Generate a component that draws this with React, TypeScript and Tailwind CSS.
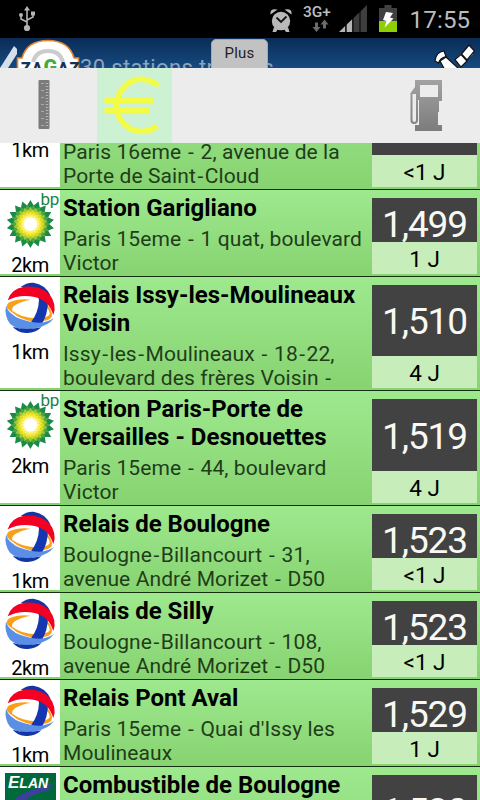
import { Fragment } from "react";
import { clsx } from "clsx";

type Brand = "bp" | "total" | "elan";

type Station = {
  brand?: Brand;
  km: string;
  title: string[];
  address: string[];
  price: string;
  age: string;
  /** row height, separator included */
  height: string;
};

const STATIONS: Station[] = [
  {
    km: "1km",
    title: ["", ""],
    address: ["Paris 16eme - 2, avenue de la", "Porte de Saint-Cloud"],
    price: "",
    age: "<1 J",
    height: "h-[115px]",
  },
  {
    brand: "bp",
    km: "2km",
    title: ["Station Garigliano"],
    address: ["Paris 15eme - 1 quat, boulevard", "Victor"],
    price: "1,499",
    age: "1 J",
    height: "h-[87px]",
  },
  {
    brand: "total",
    km: "1km",
    title: ["Relais Issy-les-Moulineaux", "Voisin"],
    address: ["Issy-les-Moulineaux - 18-22,", "boulevard des frères Voisin -"],
    price: "1,510",
    age: "4 J",
    height: "h-[114px]",
  },
  {
    brand: "bp",
    km: "2km",
    title: ["Station Paris-Porte de", "Versailles - Desnouettes"],
    address: ["Paris 15eme - 44, boulevard", "Victor"],
    price: "1,519",
    age: "4 J",
    height: "h-[115px]",
  },
  {
    brand: "total",
    km: "1km",
    title: ["Relais de Boulogne"],
    address: ["Boulogne-Billancourt - 31,", "avenue André Morizet - D50"],
    price: "1,523",
    age: "<1 J",
    height: "h-[87px]",
  },
  {
    brand: "total",
    km: "2km",
    title: ["Relais de Silly"],
    address: ["Boulogne-Billancourt - 108,", "avenue André Morizet - D50"],
    price: "1,523",
    age: "<1 J",
    height: "h-[87px]",
  },
  {
    brand: "total",
    km: "1km",
    title: ["Relais Pont Aval"],
    address: ["Paris 15eme - Quai d'Issy les", "Moulineaux"],
    price: "1,529",
    age: "1 J",
    height: "h-[87px]",
  },
  {
    brand: "elan",
    km: "",
    title: ["Combustible de Boulogne", ""],
    address: [],
    price: "1,530",
    age: "",
    height: "h-[114px]",
  },
];

/** Ring of pointed petals around (cx, cy) */
function petals(cx: number, cy: number, outer: number, inner: number, turn = 0) {
  const n = 18;
  return Array.from({ length: n * 2 }, (_, i) => {
    const a = (Math.PI * (i + turn)) / n - Math.PI / 2;
    const r = i % 2 ? inner : outer;
    return `${(cx + r * Math.cos(a)).toFixed(1)},${(cy + r * Math.sin(a)).toFixed(1)}`;
  }).join(" ");
}

function BpLogo() {
  return (
    <div className="relative h-[60px] w-[60px]">
      <svg className="block h-[60px] w-[60px]" viewBox="0 0 60 60">
        <polygon points={petals(30.4, 34, 24, 18.8)} fill="#1a8a48" />
        <polygon points={petals(30.4, 34, 19.5, 15.5, 1)} fill="#4fa540" />
        <polygon points={petals(30.4, 34, 17.5, 13)} fill="#a2cb38" />
        <polygon points={petals(30.4, 34, 15, 11, 1)} fill="#dfdc20" />
        <polygon points={petals(30.4, 34, 13, 9)} fill="#f7ea30" />
        <polygon points={petals(30.4, 34, 10.5, 7, 1)} fill="#fdf7a8" />
        <circle cx="30.4" cy="34" r="6.5" fill="#fff" />
      </svg>
      <span className="absolute top-0 left-[40.5px] text-[17px] leading-[18px] tracking-[-0.3px] text-[#1a8242]">
        bp
      </span>
    </div>
  );
}

function TotalLogo() {
  return (
    <svg className="block h-[60px] w-[60px]" viewBox="0 6 180 180">
      <path d="M62 36Q80 22 100 23Q136 28 152 62Q110 34 62 36Z" fill="#1436a4" />
      <path
        d="M92 74Q54 70 28 82Q16 92 22 100Q30 110 38 113Q32 98 46 90Q62 80 92 74Z"
        fill="#f9a01b"
      />
      <path d="M38 108Q64 128 106 130L100 140Q60 134 36 112Z" fill="#f9a01b" />
      <path d="M140 88Q160 110 155 126Q148 138 122 138L127 127Q144 127 149 118Q150 106 138 96Z" fill="#f9a01b" />
      <path d="M113 62L144 78Q144 118 124 150L92 143Q116 112 117 74Z" fill="#1436b0" />
      <path
        d="M23 76Q32 42 72 35Q122 30 148 58Q172 88 160 120Q152 96 137 82Q126 72 104 66Q60 56 23 76Z"
        fill="#f40022"
      />
      <path d="M18 92Q26 118 62 132Q92 143 120 143Q142 142 162 129Q146 152 106 160Q56 170 30 146Q12 122 18 92Z" fill="#5b8fe6" />
      <path d="M38 155Q74 168 124 157Q104 176 78 174Q52 172 38 155Z" fill="#1436a4" />
    </svg>
  );
}

function ElanLogo() {
  return (
    <div className="relative ml-[5px] h-[50px] w-[51px] bg-[#00693c]">
      <svg className="absolute top-0 left-0" width="51" height="27" viewBox="0 0 51 27">
        <path d="M9 27Q16 20 30 16L49 10L43 15L48 16Q30 20 20 27Z" fill="#3d3f9c" />
      </svg>
      <span className="absolute top-0 left-[3px] font-['Liberation_Sans'] text-[17px] leading-[20px] font-bold text-white italic">
        E<span className="text-[14px]">LAN</span>
      </span>
    </div>
  );
}

function StatusBar() {
  return (
    <div className="relative h-[38px] bg-black">
      <svg className="block" width="480" height="38" viewBox="0 0 480 38">
        {/* usb */}
        <g fill="none" stroke="#b4b4b4" strokeWidth="1.6">
          <path d="M27 9V27M27 22L21 19V15M27 20L33 17V14" />
        </g>
        <g fill="#b4b4b4">
          <path d="M27 6L30 10.5H24Z" />
          <circle cx="27" cy="28" r="3.1" />
          <circle cx="21" cy="15" r="2" />
          <rect x="31" y="11.5" width="4" height="4" />
        </g>
        {/* alarm */}
        <g fill="#b9b9b9">
          <circle cx="281" cy="21" r="9.2" />
          <path d="M270.5 14.5Q269.5 8 277.5 9.5ZM291.5 14.5Q292.5 8 284.5 9.5Z" />
          <path d="M274 27L272.5 32H276L278 29ZM288 27L289.5 32H286L284 29Z" />
        </g>
        <path d="M276.5 17.5L281 22L286.5 16.5" fill="none" stroke="#111" strokeWidth="1.8" />
        {/* data arrows */}
        <path d="M315 22.5H318V27H320.5L316.5 32L312.5 27H315ZM323 28.5H326V24.5H328.5L324.5 19.5L320.5 24.5H323Z" fill="#6b6b6b" />
        {/* signal */}
        <path d="M339 32L367 5V32Z" fill="#3e3e3e" />
        <path d="M339 32L345 26.2V32ZM346.5 24.8L352 19.5V32H346.5Z" fill="#b5b5b5" />
        <path d="M353 5V32M360 5V32M346 20V32" stroke="#000" strokeWidth="1" />
        {/* battery */}
        <path d="M384.5 5H391.5V8H397V21H379V8H384.5Z" fill="#404040" />
        <path d="M379 21H397V32H379Z" fill="#8fce00" />
        <path d="M386 12L393 13L390 17.5L393.5 18.5L384.5 27.5L386.5 21L383 20Z" fill="#fff" />
      </svg>
      <span className="absolute top-[4px] left-[303px] text-[15.5px] leading-[16px] font-medium text-[#bdbdbd]">
        3G+
      </span>
      <span className="absolute top-[6px] left-[409.5px] text-[24px] leading-[29px] tracking-[0.2px] text-[#bcbcbc]">
        17:55
      </span>
    </div>
  );
}

function Header() {
  return (
    <div className="relative h-[30px] overflow-hidden bg-gradient-to-b from-[#0a2c57] to-[#164a80]">
      <svg className="absolute top-0 left-0" width="80" height="30" viewBox="0 38 80 30">
        <path d="M14 46L17 49V54L8 68H0Z" fill="#d5dee9" />
        <path d="M17.5 70V58H22Q27 40.5 48 40.5Q69 40.5 74 58H78.5V70Z" fill="#fff" stroke="#e8842c" strokeWidth="1.6" />
        <path d="M33 62Q36 51 48 51Q60 51 63 62" fill="none" stroke="#ccc" strokeWidth="4" />
      </svg>
      <span className="absolute top-[20px] left-[21px] text-[16px] leading-[20px] font-black tracking-[0.8px] text-[#17325a]">
        ZA<span className="text-[20px] leading-[18px] text-[#3fae3a]">G</span>AZ
      </span>
      <span className="absolute top-[16px] left-[80px] text-[22px] leading-[28px] tracking-[0.35px] whitespace-nowrap text-[#8ca3bf]">
        30 stations trouvés
      </span>
      <div className="absolute top-[1px] left-[211px] h-[40px] w-[57px] rounded-t-[5px] border border-[#a8a8a8] bg-[#c2c2c2] text-center text-[15px] leading-[26px] tracking-[0.2px] text-[#222]">
        Plus
      </div>
      {/* satellite */}
      <svg className="absolute top-0 left-[430px]" width="50" height="30" viewBox="430 38 50 30">
        <g fill="#fff" stroke="#111" strokeWidth="1.2">
          <path d="M440 61L446 57L459 69L446 72Z" />
          <path d="M435 61Q436 52 444 51L446 56.5Q440 58 438.5 63Z" />
          <path d="M455 94L461 94" />
          <path d="M455 59.500L467.500 48L473 54L461 66Z" stroke="none" />
          <path d="M455 59.5L461 54.5L467 61L461 67ZM461.5 54L469 45L474.5 51L467 60Z" />
        </g>
      </svg>
    </div>
  );
}

function Toolbar() {
  return (
    <div className="flex h-[75px] bg-[#ececec]">
      <svg className="block" width="97" height="75" viewBox="0 68 97 75">
        <rect x="38.5" y="80" width="11" height="49" rx="1" fill="#7b7b7b" />
        <path d="M47 83V126" stroke="#b5b5b5" strokeWidth="2.5" strokeDasharray="1 2" />
        <path d="M42.5 83V126" stroke="#aaa" strokeWidth="3" strokeDasharray="1 6" />
      </svg>
      <div className="h-[75px] w-[75px] bg-[#cdf1d3]">
        <svg className="block" width="75" height="75" viewBox="97 68 75 75">
          <path
            d="M158.5 86C149 77.5 134 76.5 125 86C113 98 114 114 124 124C133 133 147 134 157 126"
            fill="none"
            stroke="#f3fb47"
            strokeWidth="5.5"
          />
          <path d="M104.5 100.5H153M104.5 110.5H149" stroke="#f3fb47" strokeWidth="5" />
        </svg>
      </div>
      <svg className="ml-auto block" width="75" height="75" viewBox="405 68 75 75">
        <defs>
          <linearGradient id="pump" x1="0" y1="0" x2="0" y2="1">
            <stop offset="0" stopColor="#a2a2a2" />
            <stop offset="1" stopColor="#7c7c7c" />
          </linearGradient>
        </defs>
        <path
          fillRule="evenodd"
          fill="url(#pump)"
          d="M415 80H442V101H439V112H438V125H442V131H415V125H419V100H418V120Q418 124 414 124Q410.5 124 410.5 120V93L415 87ZM420 85V97H438V85ZM412.5 94V120Q412.5 122 414.5 122Q416 122 416 120V94Z"
        />
      </svg>
    </div>
  );
}

/** Address line, hyphens get a little more room */
function AddressLine({ text }: { text: string }) {
  const parts = text.split("-");
  return (
    <p className="h-6 text-[21px] leading-[24px] tracking-[0.1px] text-[#1f3d19]">
      {parts.map((part, i) => (
        <Fragment key={i}>
          {i > 0 && <span className="px-[1.4px]">-</span>}
          {part}
        </Fragment>
      ))}
    </p>
  );
}

function StationRow({ station }: { station: Station }) {
  return (
    <div
      className={clsx(
        "flex shrink-0 border-b border-[#14300f] bg-gradient-to-b from-[#9ee98e] to-[#87d371]",
        station.height,
      )}
    >
      <div className="mb-[2px] w-[60px] shrink-0 bg-white">
        <div className="h-[63px]">
          {station.brand === "bp" && <BpLogo />}
          {station.brand === "total" && <TotalLogo />}
          {station.brand === "elan" && (
            <div className="pt-[6px]">
              <ElanLogo />
            </div>
          )}
        </div>
        <p className="text-center text-[20px] leading-[24px] tracking-[-0.4px] text-black">
          {station.km}
        </p>
      </div>
      <div className="w-[312px] shrink-0 overflow-hidden pt-1 pl-[3px] whitespace-nowrap">
        {station.title.map((line, i) => (
          <p key={i} className="h-7 text-[24px] leading-[28px] font-bold text-black">
            {line}
          </p>
        ))}
        <div className="pt-[5px]">
          {station.address.map((line) => (
            <AddressLine key={line} text={line} />
          ))}
        </div>
      </div>
      <div className="mt-2 mb-[2px] flex w-[105px] flex-col">
        <div className="flex min-h-0 flex-1 items-center justify-center bg-[#424242]">
          <span
            className={clsx(
              "text-[37px] leading-[44px] tracking-[-1.1px] text-[#f8f8f4]",
              station.title.length === 1 ? "pt-[9px]" : "pt-[3px]",
            )}
          >
            {station.price}
          </span>
        </div>
        <p className="h-8 shrink-0 bg-[#c6edba] pt-px text-center text-[22.5px] leading-[32px] text-black">
          {station.age}
        </p>
      </div>
    </div>
  );
}

export default function App() {
  return (
    <div className="flex h-[800px] w-[480px] flex-col overflow-hidden bg-black font-['Roboto',sans-serif]">
      <StatusBar />
      <Header />
      <Toolbar />
      <div className="min-h-0 flex-1 overflow-hidden">
        <div className="-mt-[68px] flex flex-col">
          {STATIONS.map((station, i) => (
            <StationRow key={i} station={station} />
          ))}
        </div>
      </div>
    </div>
  );
}
